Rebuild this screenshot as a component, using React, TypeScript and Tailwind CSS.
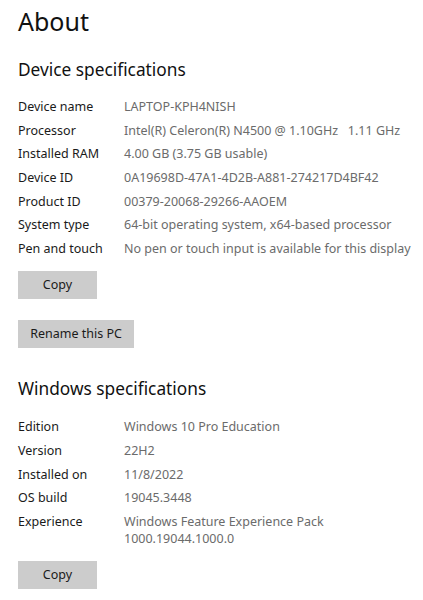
import React from "react";

const font = { fontFamily: '"Noto Sans", "Open Sans", sans-serif' };

function Row({ label, value }: { label: string; value: React.ReactNode }) {
  return (
    <div className="flex text-[12.5px] leading-[17px]">
      <div className="w-[106px] shrink-0 text-[#1a1a1a]">{label}</div>
      <div className="text-[#6b6b6b]">{value}</div>
    </div>
  );
}

function Btn({ children, w }: { children: React.ReactNode; w: string }) {
  return (
    <div className={`${w} h-[28px] bg-[#cccccc] flex items-center justify-center text-[12.5px] text-[#1a1a1a]`}>
      {children}
    </div>
  );
}

export default function App() {
  return (
    <div className="w-[423px] h-[600px] bg-white overflow-hidden pl-[18px]" style={font}>
      <div className="pt-[3px] h-[40px] text-[25px] leading-[36px] text-[#111]">About</div>
      <div className="mt-[18px] text-[17.3px] leading-[24px] text-[#111]">Device specifications</div>
      <div className="mt-[16px] flex flex-col gap-[6.7px]">
        <Row label="Device name" value="LAPTOP-KPH4NISH" />
        <Row label="Processor" value={<span className="whitespace-pre">Intel(R) Celeron(R) N4500 @ 1.10GHz   1.11 GHz</span>} />
        <Row label="Installed RAM" value="4.00 GB (3.75 GB usable)" />
        <Row label="Device ID" value="0A19698D-47A1-4D2B-A881-274217D4BF42" />
        <Row label="Product ID" value="00379-20068-29266-AAOEM" />
        <Row label="System type" value="64-bit operating system, x64-based processor" />
        <Row label="Pen and touch" value="No pen or touch input is available for this display" />
      </div>
      <div className="mt-[14px]">
        <Btn w="w-[79px]">Copy</Btn>
      </div>
      <div className="mt-[21px]">
        <Btn w="w-[116px]">Rename this PC</Btn>
      </div>
      <div className="mt-[29px] text-[17.3px] leading-[24px] text-[#111]">Windows specifications</div>
      <div className="mt-[17px] flex flex-col gap-[6.7px]">
        <Row label="Edition" value="Windows 10 Pro Education" />
        <Row label="Version" value="22H2" />
        <Row label="Installed on" value="11/8/2022" />
        <Row label="OS build" value="19045.3448" />
        <Row
          label="Experience"
          value={
            <div>
              <div>Windows Feature Experience Pack</div>
              <div>1000.19044.1000.0</div>
            </div>
          }
        />
      </div>
      <div className="mt-[14px]">
        <Btn w="w-[79px]">Copy</Btn>
      </div>
    </div>
  );
}
